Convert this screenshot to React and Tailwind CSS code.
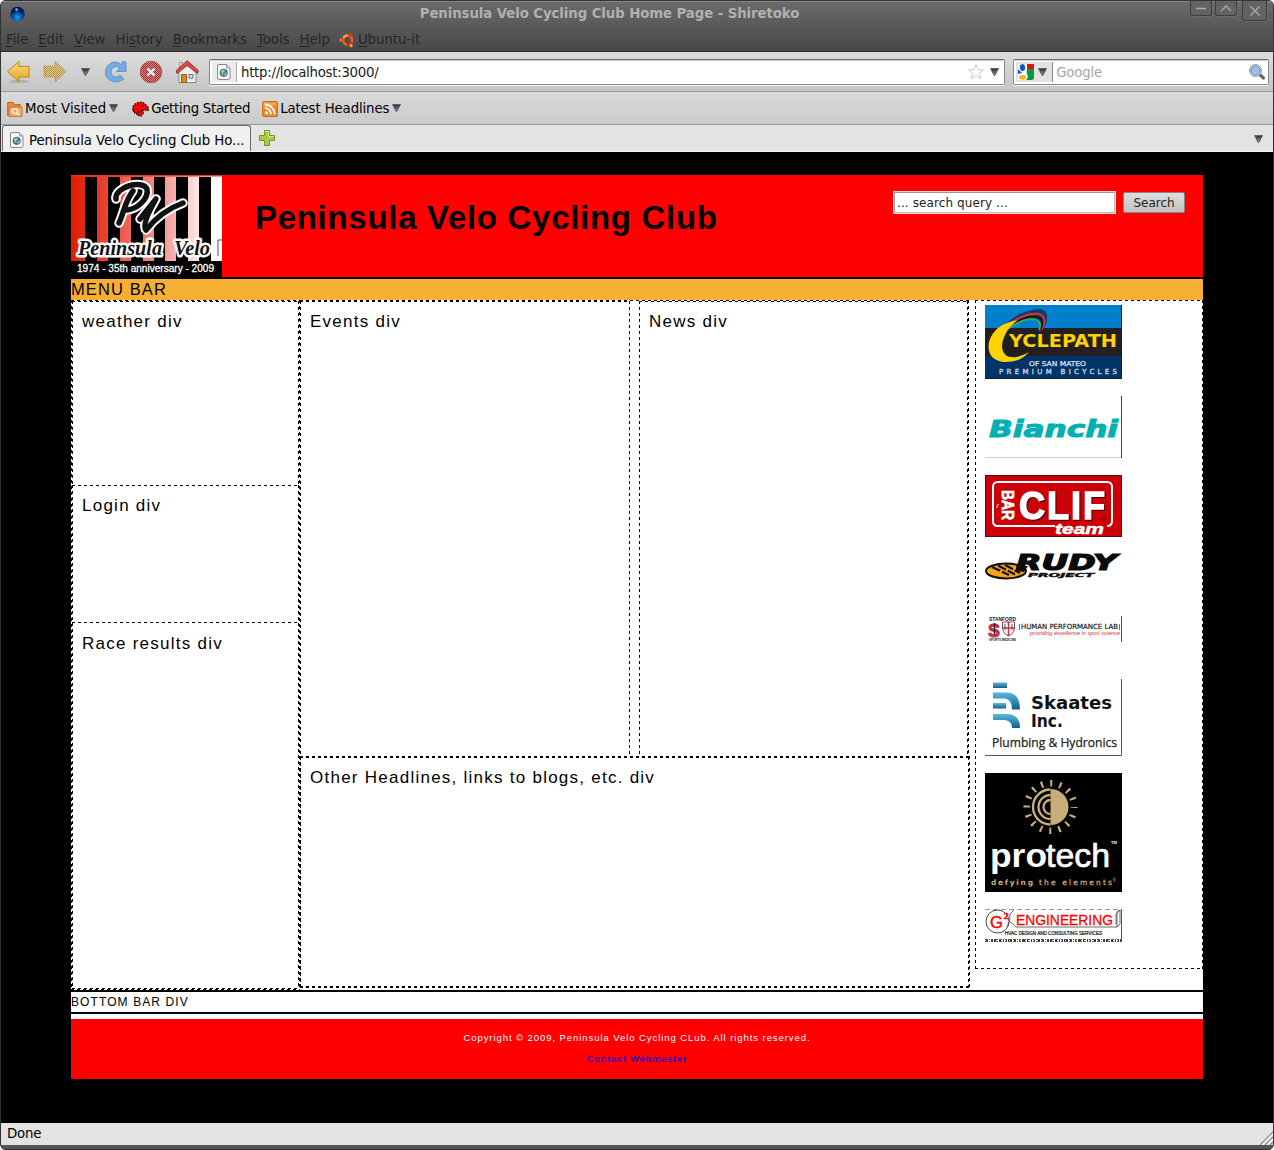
const Tri = ({ className = "" }) => (
  <svg width="9" height="8" viewBox="0 0 9 8" className={"shrink-0 " + className}>
    <defs>
      <linearGradient id="tri" x1="0" y1="0" x2="0" y2="1">
        <stop offset="0" stopColor="#2e2e2e" />
        <stop offset="1" stopColor="#999" />
      </linearGradient>
    </defs>
    <path d="M.5 .5h8L4.900 7.500h-.8z" fill="url(#tri)" stroke="#555" strokeWidth=".8" />
  </svg>
);

const PageIcon = () => (
  <svg width="16" height="16" viewBox="0 0 16 16" className="shrink-0">
    <path d="M3 .5h7.500l3.500 3.500v10q0 1.500-1.500 1.500H3q-1.500 0-1.500-1.500V2Q1.500 .5 3 .5z" fill="#f8f8f8" stroke="#888" />
    <path d="M10.500 .5v3.500H14" fill="#ddd" stroke="#999" />
    <circle cx="7.700" cy="8.800" r="3.700" fill="#4a78b0" stroke="#34618c" strokeWidth=".8" />
    <path d="M5 7.500q1-2 3-2l1 1.500-2 1 .5 2-1 1zM9 9l2-.5-1 2.700-1.500.2z" fill="#b5d28a" />
  </svg>
);

const BackIcon = () => (
  <svg width="26" height="24" viewBox="0 0 26 24" className="shrink-0">
    <defs>
      <linearGradient id="back" x1="0" y1="0" x2="0" y2="1">
        <stop offset="0" stopColor="#fcd97c" />
        <stop offset="1" stopColor="#e6a62c" />
      </linearGradient>
    </defs>
    <ellipse cx="14" cy="21.500" rx="10" ry="1.800" fill="#000" opacity=".12" />
    <path d="M2.500 11.500 14 1.500V6.500h10v10.500H14v5z" fill="url(#back)" stroke="#c0880f" />
  </svg>
);

const ForwardIcon = () => (
  <svg width="26" height="24" viewBox="0 0 26 24" className="shrink-0">
    <defs>
      <pattern id="dots" width="2" height="2" patternUnits="userSpaceOnUse">
        <path d="M0 0h1v1H0zM1 1h1v1H1z" fill="#b98a34" />
        <path d="M1 0h1v1H1zM0 1h1v1H0z" fill="#dccfa6" />
      </pattern>
    </defs>
    <path d="M24 11.500 13 1V6H2v11h11v5z" fill="url(#dots)" stroke="#a58238" strokeWidth=".8" strokeDasharray="1 1" />
  </svg>
);

const ReloadIcon = () => (
  <svg width="24" height="24" viewBox="0 0 24 24" className="shrink-0">
    <path d="M18 5.500V1.500l4 .5v9.500h-9.500l3.500-3.500q-4-3-7-.3c-3.500 3-2 8.800 2.500 9.300q2.500.3 5-1.500l3.500 3.500q-4.500 4-9.500 2.700C4 20.500 1 16.500 1.500 11.500 2 6 6.500 2 11.500 2q3.500 0 6.500 3.500z" fill="#74abe0" stroke="#5a96d0" />
  </svg>
);

const StopIcon = () => (
  <svg width="24" height="24" viewBox="0 0 24 24" className="shrink-0">
    <defs>
      <pattern id="reds" width="2" height="2" patternUnits="userSpaceOnUse">
        <path d="M0 0h2v2H0z" fill="#c98a8a" />
        <path d="M0 0h1v1H0zM1 1h1v1H1z" fill="#a62c2c" />
      </pattern>
    </defs>
    <circle cx="11" cy="12" r="10.800" fill="url(#reds)" stroke="#a34a4a" strokeWidth=".7" />
    <path d="M7.500 8.500l7 7M14.500 8.500l-7 7" stroke="#f4f4f4" strokeWidth="2.200" />
  </svg>
);

const HomeIcon = () => (
  <svg width="24" height="24" viewBox="0 0 24 24" className="shrink-0">
    <path d="M3 11v11.500h17V11L11.500 4z" fill="#eee" stroke="#888" />
    <path d="M5.500 14.500h5v8h-5z" fill="#d08f22" stroke="#96600c" />
    <path d="M13 14.500h4v3.500h-4z" fill="#dce6ee" stroke="#5a6a7a" />
    <path d="M3.500 2.500h3v5h-3z" fill="#ddd" stroke="#999" />
    <path d="M11.200 .8 22.300 10.500 21.500 13.500 11.200 5.500 1 13.500.3 10.500z" fill="#dc4a4a" stroke="#a02020" strokeWidth=".9" />
  </svg>
);

const GlobeIcon = () => (
  <svg width="16" height="16" viewBox="0 0 16 16" className="shrink-0">
    <defs>
      <radialGradient id="globe" cx=".5" cy=".75" r=".7">
        <stop offset="0" stopColor="#18a0e0" />
        <stop offset=".5" stopColor="#0b4aa0" />
        <stop offset="1" stopColor="#041440" />
      </radialGradient>
    </defs>
    <circle cx="8.500" cy="8" r="7.300" fill="url(#globe)" />
    <path d="M3 4q2-2 4 0l-1 2-2 2zM10 2.500q4 1 4 4l-2 1-2-3z" fill="#071c50" />
    <circle cx="7.500" cy="3.500" r="1.200" fill="#78c8f8" />
  </svg>
);

const UbuntuIcon = () => (
  <svg width="16" height="16" viewBox="0 0 16 16" className="shrink-0">
    <circle cx="8.500" cy="8" r="4.500" fill="none" stroke="#f0601c" strokeWidth="2.700" />
    <path d="M4.600 5.600A4.500 4.500 0 0 1 8.500 3.500" fill="none" stroke="#f8a030" strokeWidth="2.700" />
    <path d="M12.600 10A4.500 4.500 0 0 1 8 12.500" fill="none" stroke="#d82010" strokeWidth="2.700" />
    <g stroke="#505050" strokeWidth=".7">
      <circle cx="2" cy="8" r="2" fill="#f07818" />
      <circle cx="12" cy="2.500" r="2" fill="#e83818" />
      <circle cx="12" cy="13.600" r="2" fill="#f8a830" />
    </g>
  </svg>
);

const FolderIcon = () => (
  <svg width="16" height="16" viewBox="0 0 16 16" className="shrink-0">
    <path d="M.7 14.500V1.500h5.500l1 2h6v11z" fill="#e98a3c" stroke="#cc6614" />
    <path d="M2 6h13v9.300H2z" fill="#f2b377" stroke="#d0681a" />
    <circle cx="8" cy="10" r="2.400" fill="#f0a060" stroke="#fff" strokeWidth="1.200" />
    <path d="M10 12l2 2" stroke="#fff" strokeWidth="1.300" />
  </svg>
);

const DinoIcon = () => (
  <svg width="17" height="16" viewBox="0 0 17 16" className="shrink-0">
    <path d="M1 9 .8 6 3 3 6 1.500 10 1l3 2 3.500 4-.5 2.500-3.500-.5-2 1 1 2-2.500 3L5 14l-1-3-1.500 1z" fill="#f00808" stroke="#300" strokeWidth="1.200" strokeDasharray="2 1" />
    <path d="M7 10l-1 2M10 5h2M9 9l1 2" stroke="#400" strokeWidth="1.200" />
  </svg>
);

const RssIcon = () => (
  <svg width="16" height="16" viewBox="0 0 16 16" className="shrink-0">
    <rect x=".5" y=".5" width="15" height="15" rx="1.500" fill="#f08a28" stroke="#d06a10" />
    <path d="M1.500 1.500h13v3q-8 0-13 3z" fill="#f8b060" opacity=".7" />
    <circle cx="4.500" cy="11.700" r="1.500" fill="#fff" />
    <path d="M3 7.200a6 6 0 0 1 6 6M3 3.500a9.700 9.700 0 0 1 9.700 9.700" fill="none" stroke="#fff" strokeWidth="1.800" />
  </svg>
);

const U = ({ a = "", u, b }) => (
  <span>
    {a}
    <span className="underline underline-offset-2">{u}</span>
    {b}
  </span>
);

const WinButton = ({ className, d }) => (
  <div className={"flex items-center justify-center rounded-b-[3px] border border-t-0 border-[#3d3d3d] bg-[#636363] shadow-[1px_1px_0_#6c6c6c] " + className}>
    <svg width="12" height="12" viewBox="0 0 12 12">
      <path d={d} fill="none" stroke="#aaa" strokeWidth="1.400" />
    </svg>
  </div>
);

function Chrome() {
  return (
    <>
      <header className="h-[52px] shrink-0 border-b border-[#2a2a2a] bg-gradient-to-b from-[#6c6c6c] to-[#484848] shadow-[inset_0_1px_0_#333,inset_0_2px_0_#858585]">
        <div className="flex h-[27px] items-start">
          <div className="ml-[8px] mt-[6px] w-[120px]"><GlobeIcon /></div>
          <div className="mt-[5px] w-[961px] text-center text-[13.300px] font-bold leading-[17px] tracking-[-0.080px] text-[#b0b0b0]">
            Peninsula Velo Cycling Club Home Page - Shiretoko
          </div>
          <div className="ml-auto mr-[6px] mt-px flex">
            <WinButton className="mr-[3px] h-[15px] w-[22px]" d="M1 6.500h10" />
            <WinButton className="mr-[5px] h-[15px] w-[22px]" d="M1 9l5-5 5 5" />
            <WinButton className="h-[20px] w-[25px]" d="M1.500 1.500l9 9M10.500 1.500l-9 9" />
          </div>
        </div>
        <nav className="flex h-[24px] items-center gap-[10px] pl-[5px] pt-[2px] text-[13.330px] tracking-[-0.030px] text-[#262626]">
          <U u="F" b="ile" />
          <U u="E" b="dit" />
          <U u="V" b="iew" />
          <U a="Hi" u="s" b="tory" />
          <U u="B" b="ookmarks" />
          <U u="T" b="ools" />
          <U u="H" b="elp" />
          <span className="-ml-px flex items-center gap-[3px]">
            <UbuntuIcon />
            <U u="U" b="buntu-it" />
          </span>
        </nav>
      </header>

      <div className="flex h-[40px] shrink-0 items-center border-b border-[#9a9a9a] bg-gradient-to-b from-[#dcdcdc] to-[#c6c6c6] pl-[4px] pr-[4px]">
        <BackIcon />
        <span className="ml-[11px] flex"><ForwardIcon /></span>
        <Tri className="ml-[13px]" />
        <span className="ml-[14px] flex"><ReloadIcon /></span>
        <span className="ml-[12px] flex"><StopIcon /></span>
        <span className="ml-[12px] flex"><HomeIcon /></span>
        <div className="ml-[9px] flex h-[26px] w-[797px] items-center rounded-[2px] border border-[#888] border-t-[#6c6c6c] bg-white pl-[2px] shadow-[inset_0_1px_0_#ccc,0_1px_0_#f2f2f2]">
          <div className="flex h-[20px] w-[25px] items-center justify-center border-r border-[#aaa] bg-[#ececec]"><PageIcon /></div>
          <span className="ml-[4px] pt-[2px] text-[13.330px] tracking-[-0.280px] text-[#1a1a1a]">http://localhost:3000/</span>
          <svg width="18" height="18" viewBox="0 0 18 18" className="ml-auto">
            <path d="M8 1.500l2 5.300h5.600l-4.400 3.500 1.600 5.700L8 12.700 3.200 16l1.600-5.700L.4 6.800H6z" fill="#fff" stroke="#ccc" />
          </svg>
          <Tri className="ml-[4px] mr-[5px]" />
        </div>
        <div className="ml-[8px] flex h-[26px] w-[256px] items-center rounded-[2px] border border-[#888] border-t-[#6c6c6c] bg-white pl-[2px] shadow-[inset_0_1px_0_#ccc,0_1px_0_#f2f2f2]">
          <div className="flex h-[20px] w-[37px] items-center border-r border-[#888] bg-[#e2e2e2] pl-[2px]">
            <svg width="16" height="16" viewBox="0 0 16 16">
              <path d="M0 0h16v16H0z" fill="#fff" />
              <path d="M9 0h7v5H9z" fill="#e8100c" />
              <path d="M9 5h7v9q0 2-2 2H8q3-3 1-5.500-1-2 0-5.500z" fill="#0c9640" />
              <ellipse cx="4.500" cy="3.600" rx="2.700" ry="3.500" fill="#1258b8" transform="rotate(-10 4.500 3.600)" />
              <path d="M0 5l4 4-4 1z" fill="#1258b8" />
              <ellipse cx="4.600" cy="13.300" rx="3.400" ry="2.400" fill="#f4b418" />
            </svg>
            <Tri className="ml-[4px]" />
          </div>
          <span className="ml-[3px] pt-[2px] text-[13.330px] tracking-[-0.200px] text-[#a6a6a6]">Google</span>
          <svg width="18" height="18" viewBox="0 0 18 18" className="ml-auto mr-[2px]">
            <path d="M11 11l4.500 4" stroke="#666" strokeWidth="3.200" strokeLinecap="round" />
            <circle cx="7.500" cy="7.500" r="6" fill="#e4e4e4" stroke="#888" strokeWidth=".9" />
            <circle cx="7.500" cy="7.500" r="4.500" fill="#9cc0ec" stroke="#5080bc" strokeWidth=".9" />
          </svg>
        </div>
      </div>

      <div className="flex h-[33px] shrink-0 items-center border-b border-[#9a9a9a] bg-gradient-to-b from-[#dadada] to-[#cacaca] pl-[6px] text-[13.330px] text-black">
        <span className="mt-px"><FolderIcon /></span>
        <span className="ml-[2px] pt-[2px]">Most Visited</span>
        <Tri className="ml-[3px]" />
        <span className="ml-[14px] mt-px"><DinoIcon /></span>
        <span className="ml-[2px] pt-[2px] tracking-[-0.270px]">Getting Started</span>
        <span className="ml-[12px] mt-px"><RssIcon /></span>
        <span className="ml-[2px] pt-[2px] tracking-[-0.130px]">Latest Headlines</span>
        <Tri className="ml-[3px]" />
      </div>

      <div className="flex h-[27px] shrink-0 items-end border-b border-[#f4f4f4] bg-[#e3e3e3]">
        <div className="ml-px flex h-[26px] w-[249px] items-center rounded-t-[3px] border border-b-0 border-[#6a6a6a] bg-[#f0f0f0] pl-[6px] pt-[2px] text-[13.330px]">
          <PageIcon />
          <span className="ml-[4px] whitespace-nowrap pt-[2px] tracking-[-0.080px]">Peninsula Velo Cycling Club Ho...</span>
        </div>
        <svg width="16" height="16" viewBox="0 0 16 16" className="mb-[5px] ml-[8px]">
          <path d="M5.500 .5h5v5h5v5h-5v5h-5v-5h-5v-5h5z" fill="#a9cc46" stroke="#6f9a14" />
          <path d="M6.500 1.500h3v5h5" fill="none" stroke="#d4e89a" />
        </svg>
        <Tri className="mb-[8px] ml-auto mr-[10px]" />
      </div>
    </>
  );
}

const ClubLogo = () => (
  <svg width="151" height="102" viewBox="0 0 151 102" className="shrink-0">
    <defs>
      <linearGradient id="fade">
        <stop offset="0" stopColor="#e01c00" />
        <stop offset=".2" stopColor="#e83c2c" />
        <stop offset=".6" stopColor="#f49490" />
        <stop offset=".92" stopColor="#fff" />
      </linearGradient>
    </defs>
    <path d="M0 0h151v102H0z" fill="url(#fade)" />
    <path d="M0 0h151v1.500H0z" fill="#f43020" />
    <path d="M14 2h12v84H14zM37 2h12v84H37zM60 2h12v84H60zM83 2h11v84H83zM105 2h12v84h-12zM128 2h12v84h-12zM0 86h151v16H0z" fill="#000" />
    <g fill="none" strokeLinecap="round" strokeLinejoin="round">
      <g stroke="#fff" strokeWidth="9.500">
        <path d="M45 24C43 12 72 4 76 14c2 10-10 20-20 21M62 16C53 28 53 38 48 48" />
        <path d="M69 44L85 24Q70 50 75 55 90 36 112 28" />
      </g>
      <g stroke="#111" strokeWidth="5.500">
        <path d="M45 24C43 12 72 4 76 14c2 10-10 20-20 21M62 16C53 28 53 38 48 48" />
        <path d="M69 44L85 24Q70 50 75 55 90 36 112 28" />
      </g>
    </g>
    <path d="M151 65h-4v16" fill="none" stroke="#555" />
    <g fontFamily='"Liberation Serif", serif' fontStyle="italic" fontWeight="bold" fontSize="22" fill="#111" stroke="#fff" strokeWidth="5" strokeLinejoin="round" paintOrder="stroke">
      <text x="7" y="80" textLength="84" lengthAdjust="spacingAndGlyphs">Peninsula</text>
      <text x="103" y="80" textLength="36" lengthAdjust="spacingAndGlyphs">Velo</text>
    </g>
    <text x="6" y="97" fontSize="10" stroke="#fff" strokeWidth=".3" fill="#fff" textLength="137" fontFamily='"Liberation Sans"' lengthAdjust="spacingAndGlyphs">1974 - 35th anniversary - 2009</text>
  </svg>
);

const T = (p) => <text lengthAdjust="spacingAndGlyphs" fontFamily='"Liberation Sans", Arial, sans-serif' {...p} />;
const V = (p) => <text lengthAdjust="spacingAndGlyphs" fontFamily='"DejaVu Sans", sans-serif' {...p} />;

const Cyclepath = () => (
  <svg width="137" height="74" viewBox="0 0 137 74">
    <path d="M0 0h137v23H0z" fill="#0080cc" />
    <path d="M0 23h137v28H0z" fill="#231f20" />
    <path d="M0 51h137v23H0z" fill="#003468" />
    <path d="M14 27Q28 7 53 4q10 0 9 10-1 10-9 14 4-9 0-12Q38 8 14 27z" fill="#123a70" />
    <path d="M18 24Q38 7 54 9q9 3 3 15" fill="none" stroke="#e03030" strokeWidth="2" />
    <path d="M20 24Q40 9 53 12q7 3 3 12" fill="none" stroke="#111" strokeWidth="1.500" />
    <path d="M21 25Q42 11 52 15q5 3 2 10" fill="none" stroke="#36b048" strokeWidth="1.700" />
    <path d="M33 15Q9 19 4 37 1 54 18 57q17 1 26-10-14 8-22 4Q13 44 20 30 24 21 33 15z" fill="#ffd200" />
    <V x="24" y="41.500" fontSize="17.500" fontWeight="bold" textLength="108" fill="#ffd200">YCLEPATH</V>
    <V x="44" y="60.500" fontSize="6.500" textLength="57" fill="#cfdcea" stroke="#cfdcea" strokeWidth=".3">OF SAN MATEO</V>
    <text x="14" y="68.500" fontSize="7" textLength="118" fill="#cfdcea" stroke="#cfdcea" strokeWidth=".3" fontFamily='"DejaVu Sans"'>PREMIUM BICYCLES</text>
    <path d="M136.500 0v73.500H0" fill="none" stroke="#102030" />
  </svg>
);

const Bianchi = () => (
  <svg width="137" height="62" viewBox="0 0 137 62">
    <V x="4" y="40.500" fontSize="23" fontWeight="bold" fontStyle="italic" textLength="129" fill="#00b0b4" stroke="#00b0b4" strokeWidth="1">Bianchi</V>
    <path d="M0 61.500h136" stroke="#ccc" />
    <path d="M136.500 0v62" stroke="#444" />
  </svg>
);

const Clif = () => (
  <svg width="137" height="62" viewBox="0 0 137 62" className="overflow-visible">
    <path d="M0 0h137v62H0z" fill="#5c0808" />
    <path d="M1 1h135v60H1z" fill="#cc0007" />
    <path d="M70 51H13q-5 0-5-5V12q0-5 5-5h109q5 0 5 5v34q0 5-5 5" fill="none" stroke="#fff" strokeWidth="2" />
    <g className="drop-shadow-[1.500px_1.500px_0_#400]">
      <T x="34" y="43.500" fontSize="39" fontWeight="bold" textLength="88" letterSpacing="2" fill="#fff" stroke="#fff" strokeWidth="1.400">CLIF</T>
    </g>
    <g transform="translate(17 15) rotate(90)"><T x="0" y="0" fontSize="17" fontWeight="bold" textLength="30" fill="#fff" stroke="#fff" strokeWidth=".7">BAR</T></g>
    <path d="M14 29q-3 1-2 4" stroke="#fff" fill="none" />
    <T x="70" y="58.500" fontSize="15" fontWeight="bold" fontStyle="italic" textLength="49" fill="#fff" stroke="#fff" strokeWidth=".5">team</T>
    <circle cx="119" cy="43.500" r="1.500" fill="none" stroke="#600" strokeWidth=".7" />
  </svg>
);

const Rudy = () => (
  <svg width="137" height="28" viewBox="0 0 137 28" className="overflow-visible">
    <ellipse cx="21" cy="18" rx="20" ry="7.500" fill="#f5a216" stroke="#111" strokeWidth="2" />
    <path d="M7 14l17 8M13 12.500l17 9M20 12l15 8" stroke="#111" strokeWidth="2.200" strokeDasharray="9 2" />
    <path d="M31 13h12l-4 6-7-1z" fill="#111" />
    <V x="31" y="17" fontSize="20.500" fontWeight="bold" fontStyle="italic" textLength="101" fill="#0a0a0a" stroke="#0a0a0a" strokeWidth="1.200">RUDY</V>
    <V x="43" y="24" fontSize="5.500" fontWeight="bold" fontStyle="italic" textLength="66" fill="#111" stroke="#111" strokeWidth=".4">PROJECT</V>
  </svg>
);

const Stanford = () => (
  <svg width="137" height="26" viewBox="0 0 137 26" className="overflow-visible">
    <T x="4" y="5" fontSize="5" fontWeight="bold" textLength="27" fill="#222">STANFORD</T>
    <T x="3" y="20.500" fontSize="19" fontWeight="bold" textLength="12" fill="#c8304c" stroke="#c8304c">S</T>
    <path d="M9.500 7v12" stroke="#222" strokeWidth="1.500" />
    <path d="M17.500 6h12v7q-1 5-6 7-5-2-6-7z" fill="#fff" stroke="#b04050" />
    <path d="M23.500 6v14M18 12h11" stroke="#c8304c" strokeWidth="1.500" />
    <path d="M20 8v6M27 8v6" stroke="#555" />
    <T x="4" y="25" fontSize="3.500" fontWeight="bold" textLength="27" fill="#222">SPORTS MEDICINE</T>
    <path d="M34.500 8v6M134.500 8v6" stroke="#e04050" />
    <V x="36" y="13" fontSize="7" textLength="97" fill="#1a1a1a" stroke="#1a1a1a" strokeWidth=".2">HUMAN PERFORMANCE LAB</V>
    <T x="45" y="19" fontSize="5.500" fontStyle="italic" textLength="90" fill="#d03040">providing excellence in sport science</T>
    <path d="M136.500 0v26" stroke="#555" />
  </svg>
);

const Skaates = () => (
  <svg width="137" height="77" viewBox="0 0 137 77">
    <defs>
      <linearGradient id="pipe" x1="0" y1="0" x2="0" y2="1">
        <stop offset="0" stopColor="#5cb8dc" />
        <stop offset="1" stopColor="#12608c" />
      </linearGradient>
    </defs>
    <g fill="url(#pipe)">
      <path d="M8 3.500h14v5.500H8z" />
      <path d="M8 13.500h15q12 1 12 17h-8q0-10-7-11H8z" />
      <path d="M8 24h13v5.500H8z" />
      <path d="M8 35h15q12 1 12 14h-8q0-7-7-8H8z" />
    </g>
    <g fontFamily='"DejaVu Sans", sans-serif' fontWeight="bold" fontSize="17.500" fill="#111">
      <text x="46" y="30" textLength="81" lengthAdjust="spacingAndGlyphs">Skaates</text>
      <text x="46" y="48" textLength="32" lengthAdjust="spacingAndGlyphs">Inc.</text>
    </g>
    <text x="7" y="68" fontSize="12" fontFamily='"Open Sans", sans-serif' textLength="125" lengthAdjust="spacingAndGlyphs" fill="#222" stroke="#222" strokeWidth=".25">Plumbing &amp; Hydronics</text>
    <path d="M136.500 0v76.500H0" fill="none" stroke="#555" />
  </svg>
);

const Protech = () => (
  <svg width="137" height="119" viewBox="0 0 137 119">
    <path d="M0 0h137v119H0z" fill="#000" />
    <circle cx="65.500" cy="34" r="23" fill="none" stroke="#c9ae78" strokeWidth="8" strokeDasharray="2 7.032" strokeDashoffset="1" />
    <circle cx="65.500" cy="34" r="20.500" fill="#000" />
    <path d="M65.500 16a18 18 0 0 1 0 36z" fill="#c9ae78" />
    <path d="M65.500 16.500a17.500 17.500 0 0 0 0 35M65.500 22a12 12 0 0 0 0 24M65.500 27a7 7 0 0 0 0 14" fill="none" stroke="#c9ae78" strokeWidth="2.300" />
    <T x="5" y="94" fontSize="34" fontWeight="bold" textLength="57" fill="#fff">pro</T>
    <T x="61" y="94" fontSize="34" textLength="64" fill="#fff" stroke="#fff" strokeWidth=".7">tech</T>
    <T x="126" y="71" fontSize="4" fill="#fff" fontWeight="bold">TM</T>
    <text x="6" y="112" fontSize="7.500" fontWeight="bold" textLength="42" fill="#c9ae78" fontFamily='"DejaVu Sans"'>defying</text>
    <text x="54" y="112" fontSize="7.500" textLength="73" fill="#c9ae78" stroke="#c9ae78" strokeWidth=".25" fontFamily='"DejaVu Sans"'>the elements</text>
    <T x="127.500" y="109" fontSize="5" fill="#c9ae78">®</T>
  </svg>
);

const Engineering = () => (
  <svg width="137" height="33" viewBox="0 0 137 33" className="overflow-visible">
    <path d="M0 .5h137" stroke="#999" strokeDasharray="5 3" />
    <circle cx="12.500" cy="12.500" r="11.500" fill="none" stroke="#444" />
    <path d="M22 18q4-6 3-13l4-4M25 13q4 2 6 5h101V3l3-2v14l-3 3M131 16V5l4-4" fill="none" stroke="#444" strokeWidth=".8" />
    <T x="5" y="18.500" fontSize="16.500" textLength="13" fill="#f00" stroke="#f00" strokeWidth=".4">G</T>
    <T x="18.500" y="10" fontSize="9.500" textLength="5.500" fill="#f00" stroke="#f00" strokeWidth=".4">2</T>
    <T x="31" y="15.500" fontSize="15" textLength="97" fill="#f00" stroke="#f00" strokeWidth=".3">ENGINEERING</T>
    <T x="20" y="25.500" fontSize="5" textLength="97" fill="#111" stroke="#111" strokeWidth=".2">HVAC DESIGN AND CONSULTING SERVICES</T>
    <path d="M0 31.500h137" stroke="#222" strokeWidth="2.500" strokeDasharray="3 1 1 1 2 1 4 1" />
    <path d="M0 31.500h137" stroke="#fff" strokeWidth="1" strokeDasharray="1 2 2 3" />
    <path d="M136.500 0v33" stroke="#555" />
  </svg>
);

/* 3px-on, 3px-off dashed outline; --t, --b and --l set to 0px hide a side. */
const dashed =
  "border border-transparent bg-origin-border bg-no-repeat [background-image:repeating-linear-gradient(90deg,#000_0_3px,transparent_3px_6px),repeating-linear-gradient(90deg,#000_0_3px,transparent_3px_6px),repeating-linear-gradient(180deg,#000_0_3px,transparent_3px_6px),repeating-linear-gradient(180deg,#000_0_3px,transparent_3px_6px)] [background-position:0_0,0_100%,0_0,100%_0] [background-size:100%_var(--t,1px),100%_var(--b,1px),var(--l,1px)_100%,1px_100%] ";

const Box = ({ className = "", children }) => (
  <section className={dashed + "pl-[9px] pt-[9px] text-[17px] leading-[22px] tracking-[1.250px] [--l:1px] " + className}>{children}</section>
);

function Site() {
  return (
    <main className="h-[971px] shrink-0 bg-black px-[70px] pt-[23px] font-['Liberation_Sans',Arial,sans-serif] text-black">
      <div className="w-[1132px] bg-white">
        <div className="flex h-[104px] border-b-2 border-black bg-[#ff0000]">
          <ClubLogo />
          <h1 className="ml-[33px] mt-[23px] whitespace-nowrap text-[33px] font-bold leading-[40px] tracking-[.700px]">Peninsula Velo Cycling Club</h1>
          <form className="ml-auto mr-[18px] mt-[16px] flex gap-[7px] font-['DejaVu_Sans',sans-serif] text-[12px] text-[#222]">
            <div className="h-[23px] w-[223px] border border-[#f6dada] bg-white">
              <div className="h-[21px] rounded-[1px] border border-[#999] border-b-[#bbb] border-r-[#bbb] pl-[2px] leading-[21px] tracking-[.1px]">... search query ...</div>
            </div>
            <button type="button" className="mt-px h-[21px] w-[62px] rounded-[2px] border border-[#858585] bg-gradient-to-b from-[#dedede] to-[#c2c2c2] leading-[21px]">Search</button>
          </form>
        </div>
        <div className="h-[21px] bg-[#f8ae30] text-[16.500px] leading-[21px] tracking-[1.100px]">MENU BAR</div>

        <div className="flex h-[690px]">
          <div className={dashed + "flex w-[229px] flex-col"}>
            <Box className="h-[184px] [--b:0px]">weather div</Box>
            <Box className="h-[138px]">Login div</Box>
            <Box className="grow [--t:0px]">Race results div</Box>
          </div>
          <div className="w-[675px]">
            <div className={dashed + "flex h-[456px] w-[669px] justify-between [--b:0px] [--l:0px]"}>
              <Box className="-ml-px w-[330px]">Events div</Box>
              <Box className="w-[329px] tracking-[1.180px]">News div</Box>
            </div>
            <div className={dashed + "flex h-[232px] w-[670px]"}>
              <Box className="-ml-px grow">Other Headlines, links to blogs, etc. div</Box>
            </div>
          </div>
          <aside className={dashed + "flex h-[669px] w-[228px] flex-col items-start pl-[9px] pt-[4px]"}>
            <Cyclepath />
            <div className="mt-[17px]"><Bianchi /></div>
            <div className="mt-[17px]"><Clif /></div>
            <div className="mt-[16px]"><Rudy /></div>
            <div className="mt-[35px]"><Stanford /></div>
            <div className="mt-[37px]"><Skaates /></div>
            <div className="mt-[17px]"><Protech /></div>
            <div className="mt-[17px]"><Engineering /></div>
          </aside>
        </div>

        <div className="h-[24px] border-y-2 border-black text-[12px] leading-[20px] tracking-[1.100px]">BOTTOM BAR DIV</div>
        <footer className="mt-[5px] h-[60px] bg-[#ff0000] pt-[8px] text-center text-[9.500px] leading-[21px] tracking-[.930px]">
          <p className="text-white">Copyright © 2009, Peninsula Velo Cycling CLub. All rights reserved.</p>
          <p className="font-bold tracking-[.680px] text-[#4000b4]">Contact Webmaster</p>
        </footer>
      </div>
    </main>
  );
}

export default function App() {
  return (
    <div className="h-[1150px] w-[1274px] overflow-hidden bg-white font-['DejaVu_Sans',sans-serif]">
      <div className="flex h-[1150px] flex-col overflow-hidden rounded-[6px] border-x border-[#333] bg-[#555]">
        <Chrome />
        <Site />
        <div className="flex h-[22px] shrink-0 justify-between bg-[#e3e3e3] pl-[6px] text-[13.330px] leading-[21px]">
          <span className="tracking-[-0.200px]">Done</span>
          <svg width="14" height="14" viewBox="0 0 14 14" className="mt-[8px]">
            <path d="M1 14L14 1M6 14l8-8M11 14l3-3" stroke="#888" strokeWidth="1.200" />
            <path d="M3 14L14 3M8 14l6-6" stroke="#fff" strokeWidth="1" />
          </svg>
        </div>
        <div className="h-[5px] shrink-0 border-b border-[#2c2c2c] bg-[#555]" />
      </div>
    </div>
  );
}
